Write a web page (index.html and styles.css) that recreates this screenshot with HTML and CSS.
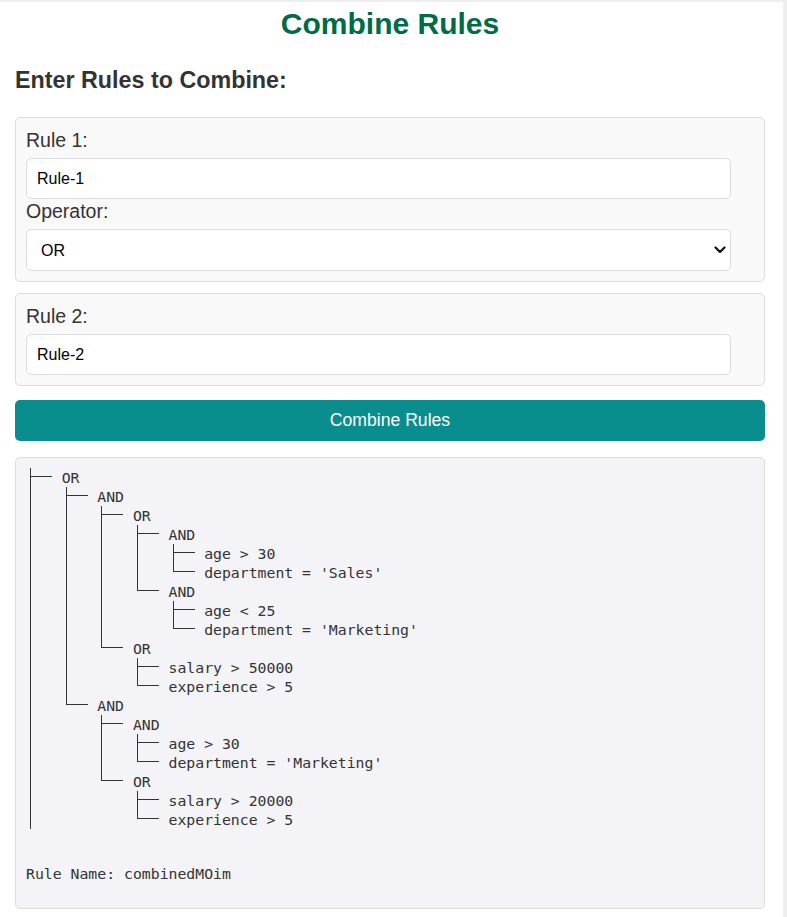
FILE: index.html
```html
<!DOCTYPE html>
<html lang="en">
<head>
<meta charset="utf-8">
<title>Combine Rules</title>
<link rel="stylesheet" href="styles.css">
</head>
<body>
<div class="page">
  <h1 class="title">Combine Rules</h1>
  <h2 class="subtitle">Enter Rules to Combine:</h2>

  <div class="card">
    <label class="field-label" for="rule1">Rule 1:</label>
    <input class="field" id="rule1" type="text" value="Rule-1">
    <label class="field-label" for="op">Operator:</label>
    <div class="select-wrap">
      <select class="field select" id="op">
        <option>OR</option>
        <option>AND</option>
      </select>
      <svg class="chevron" width="12" height="8" viewBox="0 0 12 8" aria-hidden="true">
        <path d="M1.5 1.5 L6 6 L10.5 1.5" fill="none" stroke="#111" stroke-width="2.2" stroke-linecap="round" stroke-linejoin="round"/>
      </svg>
    </div>
  </div>

  <div class="card">
    <label class="field-label" for="rule2">Rule 2:</label>
    <input class="field" id="rule2" type="text" value="Rule-2">
  </div>

  <button class="btn" type="button">Combine Rules</button>

  <div class="output">
    <ul class="tree">
      <li class="root">OR
        <ul>
          <li>AND
            <ul>
              <li>OR
                <ul>
                  <li>AND
                    <ul>
                      <li>age &gt; 30</li>
                      <li>department = 'Sales'</li>
                    </ul>
                  </li>
                  <li>AND
                    <ul>
                      <li>age &lt; 25</li>
                      <li>department = 'Marketing'</li>
                    </ul>
                  </li>
                </ul>
              </li>
              <li>OR
                <ul>
                  <li>salary &gt; 50000</li>
                  <li>experience &gt; 5</li>
                </ul>
              </li>
            </ul>
          </li>
          <li>AND
            <ul>
              <li>AND
                <ul>
                  <li>age &gt; 30</li>
                  <li>department = 'Marketing'</li>
                </ul>
              </li>
              <li>OR
                <ul>
                  <li>salary &gt; 20000</li>
                  <li>experience &gt; 5</li>
                </ul>
              </li>
            </ul>
          </li>
        </ul>
      </li>
    </ul>
    <div class="rule-name">Rule Name: combinedMOim</div>
  </div>
</div>
</body>
</html>
```

FILE: styles.css
```css
html, body {
  margin: 0;
  padding: 0;
}

body {
  background: #eeeeee;
  font-family: "Liberation Sans", Arial, sans-serif;
  color: #333;
}

.page {
  width: 783px;
  box-sizing: border-box;
  margin-top: 2px;
  padding: 1px 18px 8px 15px;
  background: #ffffff;
  min-height: 915px;
}

.title {
  margin: 4px 0 0;
  font-size: 30px;
  line-height: 34px;
  font-weight: bold;
  text-align: center;
  color: #006b45;
}

.subtitle {
  margin: 26px 0 23px;
  font-size: 23.3px;
  line-height: 27px;
  font-weight: bold;
  color: #333;
}

.card {
  background: #f9f9f9;
  border: 1px solid #dddddd;
  border-radius: 5px;
  padding: 10px;
  margin-bottom: 11px;
}

.field-label {
  display: block;
  font-size: 19.5px;
  line-height: 24px;
  color: #333;
  margin-bottom: 6px;
}

.field {
  display: block;
  box-sizing: border-box;
  width: calc(100% - 23px);
  height: 41px;
  padding: 10px;
  border: 1px solid #dddddd;
  border-radius: 5px;
  background: #ffffff;
  font-family: "Liberation Sans", Arial, sans-serif;
  font-size: 16px;
  color: #000;
  outline: none;
}

.select-wrap {
  position: relative;
  width: calc(100% - 23px);
}

.select {
  width: 100%;
  height: 42px;
  padding-left: 14px;
  appearance: none;
  -webkit-appearance: none;
}

.chevron {
  position: absolute;
  right: 5px;
  top: 17px;
  pointer-events: none;
}

.btn {
  display: block;
  width: 100%;
  height: 41px;
  margin: 14px 0 16px;
  border: none;
  border-radius: 5px;
  background: #0a8e8d;
  color: #ffffff;
  font-family: "Liberation Sans", Arial, sans-serif;
  font-size: 17.6px;
}

.output {
  background: #f4f4f8;
  border: 1px solid #dddddd;
  border-radius: 5px;
  padding: 10px 10px 25px 10px;
  font-family: "DejaVu Sans Mono", monospace;
  font-size: 14.8px;
  line-height: 19px;
  color: #333;
}

.tree,
.tree ul {
  list-style: none;
  margin: 0;
  padding: 0;
}

.tree li {
  padding-left: 4ch;
  white-space: nowrap;
  background-image: linear-gradient(#333, #333), linear-gradient(#333, #333);
  background-repeat: no-repeat;
  background-position: 4px 8px, 4px 0;
  background-size: 22px 1px, 1px 100%;
}

.tree li:last-child {
  background-size: 22px 1px, 1px 9px;
}

.tree > li.root {
  background-size: 22px 1px, 1px 100%;
}

.rule-name {
  margin-top: 35px;
  white-space: pre;
}
```
